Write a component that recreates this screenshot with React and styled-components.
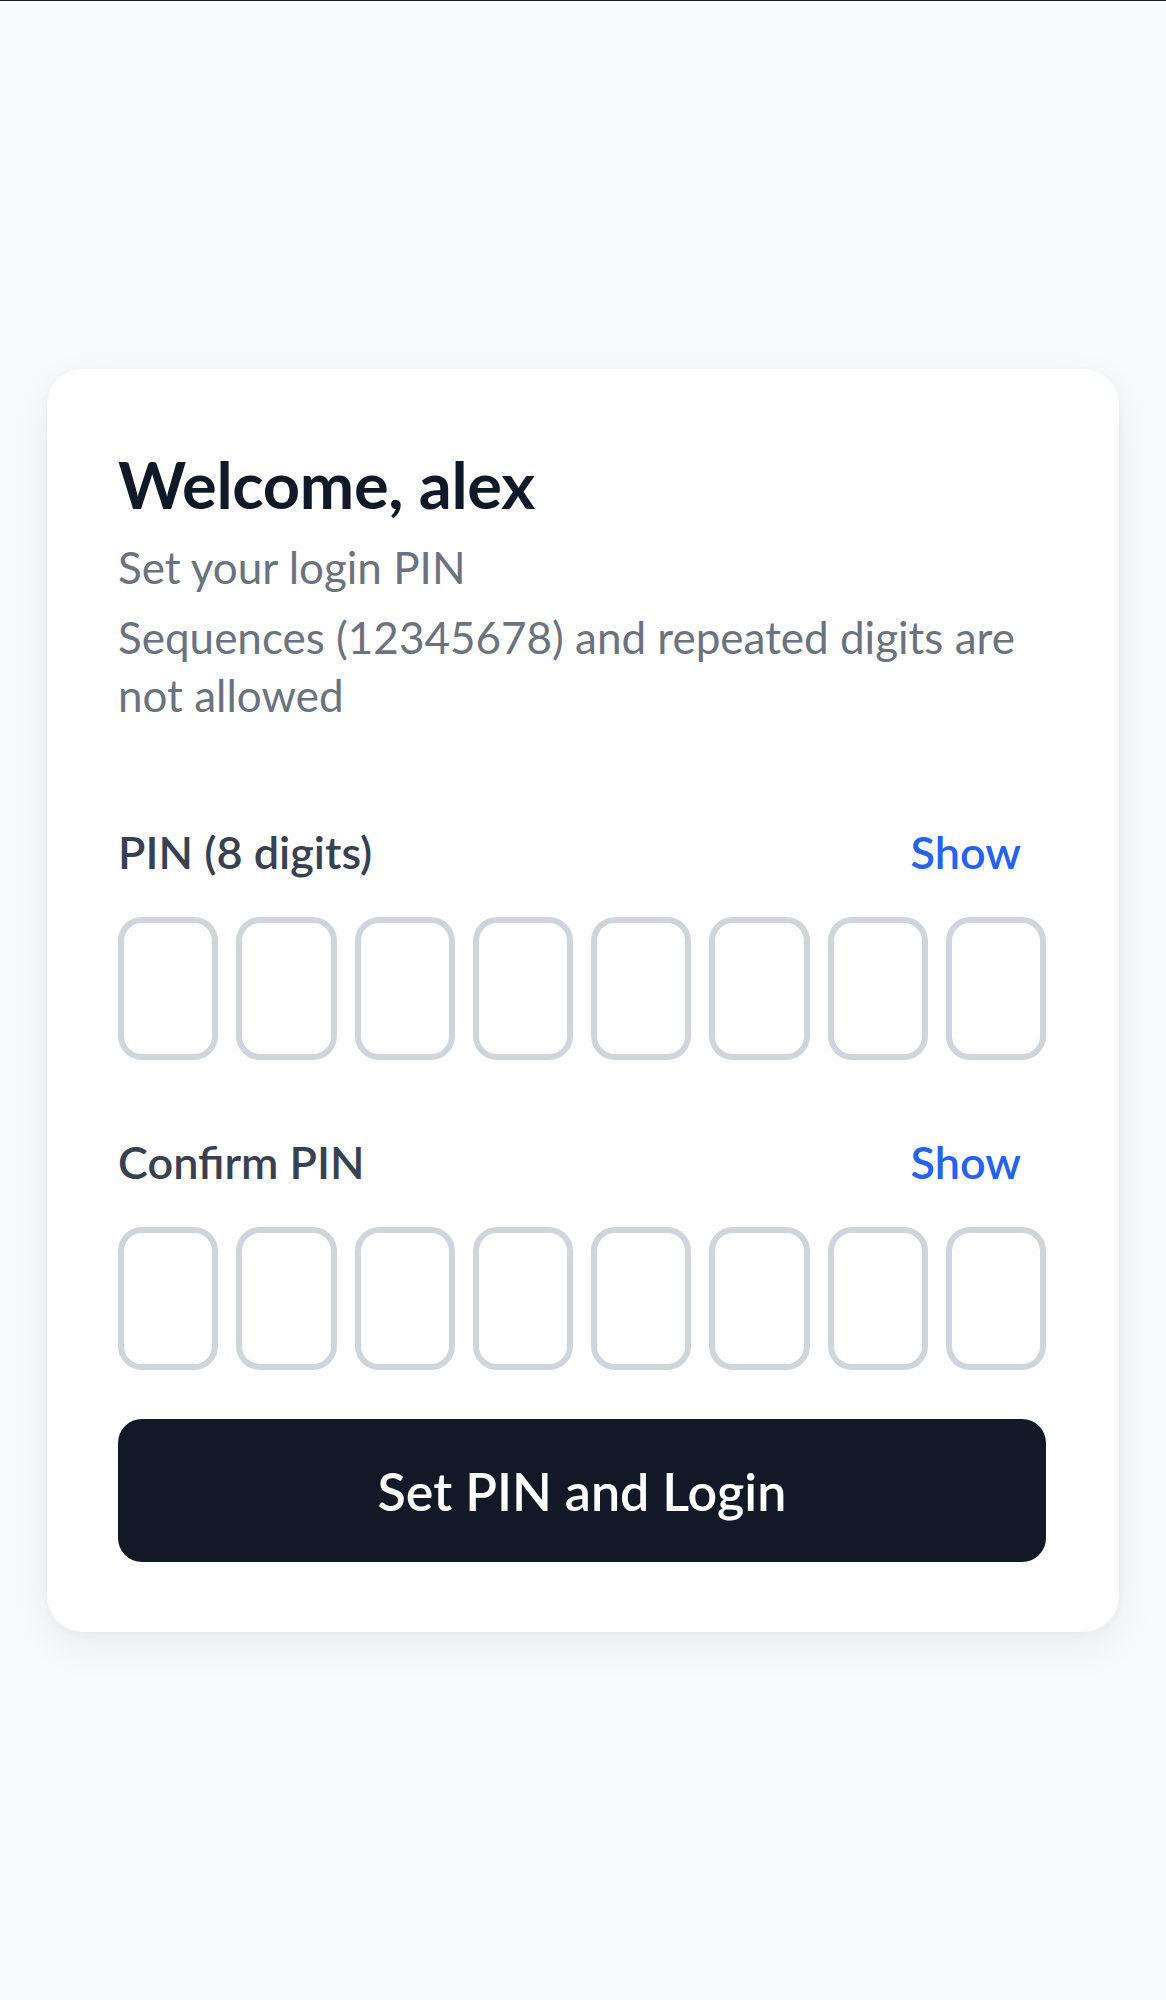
import React, { useState } from 'react'
import styled, { createGlobalStyle } from 'styled-components'

const GlobalStyle = createGlobalStyle`
  * {
    box-sizing: border-box;
  }
  body {
    margin: 0;
    background: #f9fafb;
    font-family: Lato, "Noto Sans", sans-serif;
    -webkit-font-smoothing: antialiased;
  }
`

const Page = styled.div`
  min-height: 100vh;
  border-top: 1px solid #16181d;
  display: flex;
  align-items: center;
  justify-content: center;
  padding: 0 47px;
`

const Card = styled.div`
  width: 100%;
  background: #ffffff;
  border-radius: 36px;
  padding: 80px 73px 70px 71px;
  box-shadow: 0 14px 40px rgba(17, 24, 39, 0.07), 0 2px 8px rgba(17, 24, 39, 0.03);
`

const Title = styled.h1`
  margin: 0;
  font-size: 65px;
  line-height: 70px;
  font-weight: 700;
  color: #111827;
  letter-spacing: -0.3px;
`

const Subtitle = styled.p`
  margin: 20px 0 0;
  font-size: 44px;
  line-height: 56px;
  color: #6b7280;
`

const Hint = styled.p`
  margin: 13px 0 0;
  font-size: 44px;
  line-height: 58px;
  color: #6b7280;
`

const Field = styled.div`
  margin-top: ${p => p.$gap}px;
`

const LabelRow = styled.div`
  display: flex;
  align-items: baseline;
  justify-content: space-between;
`

const Label = styled.label`
  font-size: 45px;
  line-height: 56px;
  font-weight: 600;
  color: #374151;
`

const ShowButton = styled.button`
  border: none;
  background: none;
  padding: 0 25px 0 0;
  font-family: inherit;
  font-size: 45px;
  line-height: 56px;
  font-weight: 600;
  color: #2563eb;
  cursor: pointer;
`

const Digits = styled.div`
  margin-top: 37px;
  display: grid;
  grid-template-columns: repeat(8, minmax(0, 1fr));
  gap: 18px;
`

const DigitInput = styled.input`
  width: 100%;
  height: 143px;
  border: 6px solid #d1d5db;
  border-radius: 24px;
  background: #ffffff;
  font-family: inherit;
  font-size: 56px;
  font-weight: 600;
  color: #111827;
  text-align: center;
  padding: 0;
  outline: none;

  &:focus {
    border-color: #2563eb;
  }
`

const SubmitButton = styled.button`
  margin-top: 49px;
  width: 100%;
  height: 143px;
  border: none;
  border-radius: 24px;
  background: #131827;
  color: #ffffff;
  font-family: inherit;
  font-size: 52px;
  font-weight: 600;
  cursor: pointer;
`

const PinField = ({ label, gap }) => {
  const [visible, setVisible] = useState(false)
  return (
    <Field $gap={gap}>
      <LabelRow>
        <Label>{label}</Label>
        <ShowButton type="button" onClick={() => setVisible(v => !v)}>
          {visible ? 'Hide' : 'Show'}
        </ShowButton>
      </LabelRow>
      <Digits>
        {Array.from({ length: 8 }).map((_, i) => (
          <DigitInput
            key={i}
            type={visible ? 'text' : 'password'}
            inputMode="numeric"
            maxLength={1}
          />
        ))}
      </Digits>
    </Field>
  )
}

export default function App () {
  return (
    <>
      <GlobalStyle />
      <Page>
        <Card>
          <Title>Welcome, alex</Title>
          <Subtitle>Set your login PIN</Subtitle>
          <Hint>Sequences (12345678) and repeated digits are not allowed</Hint>
          <PinField label="PIN (8 digits)" gap={100} />
          <PinField label="Confirm PIN" gap={74} />
          <SubmitButton type="button">Set PIN and Login</SubmitButton>
        </Card>
      </Page>
    </>
  )
}
